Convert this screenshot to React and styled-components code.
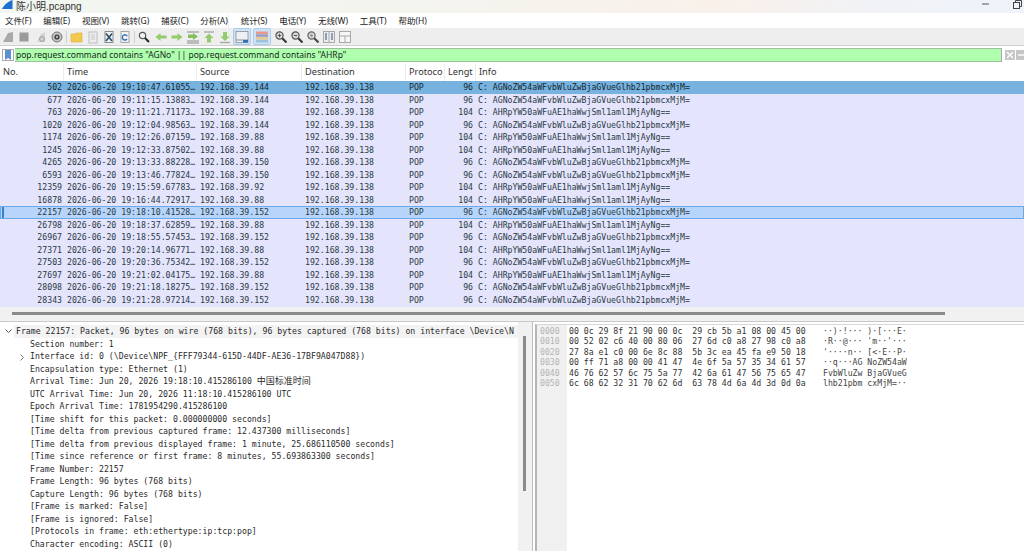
import React from "react";
import styled, { createGlobalStyle } from "styled-components";

const Global = createGlobalStyle`
  html, body { margin: 0; padding: 0; width: 1024px; height: 551px; overflow: hidden; background: #fff; }
  * { box-sizing: border-box; }
`;
const MONO = `"DejaVu Sans Mono", "Liberation Mono", "Noto Sans CJK SC", monospace`;
const UI = `"Noto Sans", "Noto Sans CJK SC", sans-serif`;

const Page = styled.div`
  width: 1024px; height: 551px; display: flex; flex-direction: column; overflow: hidden;
  font-family: ${UI}; color: #1c1c1c;
`;
const TitleBar = styled.div`
  height: 13px; flex: none; display: flex; align-items: flex-start; padding-left: 2px;
  background: linear-gradient(90deg, #f1f6f1 0%, #f5f4ee 45%, #f9f0ea 70%, #f1f2f6 85%, #eef3fa 100%);
  font-size: 9.6px; line-height: 13px; color: #333;
`;
const TitleText = styled.span` margin-left: 3px; flex: 1; font-family: "Liberation Sans", "Noto Sans CJK SC", sans-serif; font-size: 10px; `;
const WinButton = styled.div`
  width: 32px; height: 9px; display: flex; align-items: center; justify-content: center; flex: none;
  margin-right: ${p => p.$mr || 0}px;
`;
const MenuBar = styled.div`
  height: 15px; flex: none; display: flex; background: #fff; padding-left: 5px; gap: 11.8px;
  font-size: 8.5px; line-height: 15px; white-space: nowrap; color: #222;
`;
const MenuItem = styled.span`
  border-right: ${p => (p.$rule ? "1px solid #f0f0f0" : "none")};
`;
const Toolbar = styled.div`
  height: 18px; flex: none; display: flex; align-items: center; background: #eeeeee;
  border-bottom: 1px solid #cfcfcf;
`;
const ToolSlot = styled.div`
  width: ${p => p.$w || 16}px; height: 17px; flex: none; display: flex; align-items: center; justify-content: center;
  background: ${p => (p.$on ? "#cfe3f7" : "transparent")};
  border: ${p => (p.$on ? "1px solid #a9cdee" : "none")};
  border-radius: 2px;
  margin: ${p => p.$m || "0"};
`;
const ToolSep = styled.div`
  width: 1px; height: 12px; background: #cfcfcf; flex: none; margin: ${p => p.$m || "0 2px"};
`;
const FilterRow = styled.div`
  height: 18px; flex: none; display: flex; align-items: center; background: #fff; padding: 0 0 0 2px;
`;
const FilterShell = styled.div`
  flex: 1; height: 14px; display: flex; align-items: center;
  border-top: 1px solid #9fbf9f; border-bottom: 1px solid #9fbf9f; background: #afffaf;
`;
const Bookmark = styled.div`
  width: 12px; height: 12px; flex: none; background: #fff; border: 1px solid #aaa;
  display: flex; align-items: center; justify-content: center; margin-right: 1px;
`;
const FilterText = styled.div`
  flex: 1; font-size: 8.5px; line-height: 12px; color: #16281a; white-space: pre; padding-left: 1px;
`;
const FilterBtns = styled.div`
  display: flex; align-items: center; gap: 1px; width: 23px; height: 14px; padding-left: 3px; flex: none; overflow: hidden;
  border-left: 1px solid #aaa; margin-left: 0; background: #fff;
`;
const FilterBtn = styled.div`
  width: 10px; height: 10px; background: #c6c6c6; flex: none; display: flex; align-items: center; justify-content: center;
`;
const Cols = `64px 133px 105px 104px 39px 31px 1fr`;
const Header = styled.div`
  height: 17px; flex: none; display: grid; grid-template-columns: ${Cols}; background: #fff;
  font-size: 9.2px; line-height: 15px; color: #333;
`;
const HeadCell = styled.div`
  padding-left: 3px; white-space: nowrap; overflow: hidden; border-right: ${p => (p.$last ? "none" : "1px solid #ececec")};
`;
const PacketList = styled.div`
  height: 226px; flex: none; background: #e4e4fd; font: 8.2px/12.5px ${MONO}; color: #2a3a42;
`;
const Row = styled.div`
  height: 12.5px; display: grid; grid-template-columns: ${Cols}; white-space: pre; position: relative;
  background: ${p => (p.$sel === "primary" ? "#78b3e0" : p.$sel === "focus" ? "#b7d5fb" : "transparent")};
  box-shadow: ${p => (p.$sel === "focus" ? "inset 0 0 0 1px #6aa9ea" : "none")};
  color: ${p => (p.$sel === "primary" ? "#12272e" : "#2a3a42")};
`;
const Num = styled.span` text-align: right; padding-right: 2px; `;
const Cell = styled.span` padding-left: 3px; overflow: hidden; `;
const Len = styled.span` text-align: right; padding-right: 3px; `;
const Info = styled.span` padding-left: 2px; overflow: hidden; `;
const RowMark = styled.i`
  position: absolute; left: 2px; top: 1px; bottom: 1px; width: 2px; background: #3a7fc8;
`;
const HScroll = styled.div`
  height: 15px; flex: none; background: #f1f1f1; border-bottom: 1px solid #c9c9c9; padding: 5px 0 0 12px;
`;
const HThumb = styled.div` width: 933px; height: 3px; background: #8a8a8a; `;
const Bottom = styled.div` flex: 1; min-height: 0; display: flex; background: #fff; `;
const Detail = styled.div`
  width: 518px; flex: none; padding-top: 3px; font: 8.2px/12.5px ${MONO}; color: #2a2a2a; overflow: hidden;
`;
const DetailRow = styled.div`
  height: 12.5px; white-space: pre; position: relative; padding-left: ${p => (p.$top ? 16 : 30)}px;
  background: ${p => (p.$top ? "linear-gradient(90deg, #fff 14px, #f3f3f3 14px)" : "transparent")};
`;
const Arrow = styled.svg` position: absolute; left: ${p => p.$x}px; top: 4px; `;
const Cjk = styled.span` font-family: "Noto Sans CJK SC", sans-serif; font-size: 9px; `;
const VTrack = styled.div`
  width: 14px; flex: none; background: #f1f1f1; padding: 14px 0 0 5px;
`;
const VThumb = styled.div` width: 3px; height: 155px; background: #8a8a8a; `;
const Splitter = styled.div`
  width: 3px; flex: none; background: #fff; border-left: 1px solid #bdbdbd;
`;
const Hex = styled.div`
  flex: 1; display: flex; border-left: 2px solid #b5b5b5; border-top: 1px solid #d8d8d8; margin-top: 2px;
  font: 8.2px/10.4px ${MONO}; color: #333;
`;
const Offsets = styled.div`
  width: 30px; flex: none; background: #f0f0f0; padding: 1px 0 0 3px; color: #b4b4b4; white-space: pre;
`;
const HexBody = styled.div` padding: 1px 0 0 2px; flex: none; width: 256px; white-space: pre; `;
const AsciiBody = styled.div` padding-top: 1px; white-space: pre; color: #444; `;

const I = ({ children, w = 14, h = 14 }) => <svg width={w} height={h} viewBox="0 0 14 14">{children}</svg>;

const icons = {
  fin: <I><path d="M2 12 L7 3 L12 2 L12 12 Z" fill="#a9a9a9" /></I>,
  stop: <I><rect x="2.5" y="2.5" width="9" height="9" fill="#9a9a9a" /></I>,
  restart: <I><path d="M3 12 L7 4 L11 2 L11 12 Z" fill="#d4d4d4" /><circle cx="8" cy="9" r="2.4" fill="none" stroke="#9a9a9a" strokeWidth="1" /></I>,
  options: <I><circle cx="7" cy="7" r="5" fill="#c4c4c4" stroke="#777" /><circle cx="7" cy="7" r="2.6" fill="#444" /><circle cx="7" cy="7" r="1" fill="#ddd" /></I>,
  open: <I><path d="M1 4 H5 L6 3 H12 V12 H1 Z" fill="#f2c94c" stroke="#dcae35" strokeWidth=".6" /></I>,
  file: <I><rect x="3" y="2" width="8" height="11" fill="#ededed" stroke="#bdbdbd" /><path d="M5 5h4M5 7h4M5 9h4" stroke="#c8c8c8" /></I>,
  closeFile: <I><rect x="3" y="1.5" width="8" height="11" fill="#f2f2f2" stroke="#8a8a8a" /><path d="M4 3.5 L10 11 M10 3.5 L4 11" stroke="#27506f" strokeWidth="1.6" /></I>,
  reload: <I><rect x="3" y="1.5" width="8" height="11" fill="#f2f2f2" stroke="#a5a5a5" /><path d="M9.3 6.3 A2.6 2.6 0 1 0 9 9" fill="none" stroke="#2f6eb5" strokeWidth="1.4" /></I>,
  find: <I><circle cx="5.5" cy="5.5" r="3.2" fill="#eef2f2" stroke="#555" strokeWidth="1.2" /><path d="M8 8 L12 12" stroke="#222" strokeWidth="2" /></I>,
  back: <I><path d="M1.5 7 L6.5 3 V5.5 H12.5 V8.5 H6.5 V11 Z" fill="#93cc6c" /></I>,
  fwd: <I><path d="M12.5 7 L7.5 3 V5.5 H1.5 V8.5 H7.5 V11 Z" fill="#93cc6c" /></I>,
  jump: <I><path d="M1 2h12M1 11h12M1 13h12" stroke="#8c8c8c" /><path d="M2 4.5h5V3l5 3.5-5 3.500V8H2z" fill="#84bf5b" /></I>,
  first: <I><path d="M2 2h10" stroke="#a9a9a9" strokeWidth="1.4" /><path d="M7 3.500 L11.500 8 H9 V12.500 H5 V8 H2.500 Z" fill="#93cc6c" /></I>,
  last: <I><path d="M2 12.500h10" stroke="#a9a9a9" strokeWidth="1.4" /><path d="M7 11 L11.500 6.500 H9 V2 H5 V6.500 H2.500 Z" fill="#93cc6c" /></I>,
  scroll: <I><rect x="1" y="1.500" width="12" height="11" fill="#eef1f4" stroke="#8a8f96" strokeWidth=".8" /><path d="M1 10h12" stroke="#8a8f96" /><rect x="8" y="10" width="5" height="2.500" fill="#2f6db5" /></I>,
  color: <I><rect x="1" y="1.500" width="12" height="2.500" fill="#e79a8c" /><rect x="1" y="4.300" width="12" height="2.500" fill="#9a9ac4" /><rect x="1" y="7.100" width="12" height="2.500" fill="#e6c98a" /><rect x="1" y="9.900" width="12" height="2.500" fill="#9cc2dd" /></I>,
  zoomIn: <I><circle cx="5.500" cy="5.500" r="3.600" fill="#d9d9d9" stroke="#555" strokeWidth="1.200" /><path d="M8.300 8.300 L12.500 12.500" stroke="#333" strokeWidth="2" /><path d="M3.800 5.500h3.400M5.500 3.800v3.400" stroke="#555" /></I>,
  zoomOut: <I><circle cx="5.500" cy="5.500" r="3.600" fill="#d9d9d9" stroke="#555" strokeWidth="1.200" /><path d="M8.300 8.300 L12.500 12.500" stroke="#333" strokeWidth="2" /><path d="M3.800 5.500h3.400" stroke="#555" /></I>,
  zoomFit: <I><circle cx="5.500" cy="5.500" r="3.600" fill="#d9d9d9" stroke="#666" strokeWidth="1.200" /><path d="M8.300 8.300 L12.500 12.500" stroke="#444" strokeWidth="2" /><circle cx="5.500" cy="5.500" r="1.200" fill="#888" /></I>,
  resize: <I><rect x="1.500" y="1.500" width="11" height="11" fill="#ececec" stroke="#a8a8a8" /><path d="M7 2v10" stroke="#a8a8a8" /><path d="M4 3v7M10 3v7" stroke="#5f7f9f" strokeWidth="1.400" /></I>,
  grid: <I><rect x="1.500" y="1.500" width="11" height="11" fill="#f6f6f6" stroke="#a8a8a8" /><path d="M1.500 6h11M7 6v6.500" stroke="#a8a8a8" /></I>,
};

const Tool = ({ n, ...rest }) => <ToolSlot {...rest}>{icons[n]}</ToolSlot>;

const menus = ["文件(F)", "编辑(E)", "视图(V)", "跳转(G)", "捕获(C)", "分析(A)", "统计(S)", "电话(Y)", "无线(W)", "工具(T)", "帮助(H)"];
const A = "AGNoZW54aWFvbWluZwBjaGVueGlhb21pbmcxMjM=";
const B = "AHRpYW50aWFuAE1haWwjSml1aml1MjAyNg==";
const rows = [
  ["502", "19:10:47.61055", "144", 96, A, "primary"],
  ["677", "19:11:15.13883", "144", 96, A],
  ["763", "19:11:21.71173", "88", 104, B],
  ["1020", "19:12:04.98563", "144", 96, A],
  ["1174", "19:12:26.07159", "88", 104, B],
  ["1245", "19:12:33.87502", "88", 104, B],
  ["4265", "19:13:33.88228", "150", 96, A],
  ["6593", "19:13:46.77824", "150", 96, A],
  ["12359", "19:15:59.67783", "92", 104, B],
  ["16878", "19:16:44.72917", "88", 104, B],
  ["22157", "19:18:10.41528", "152", 96, A, "focus"],
  ["26798", "19:18:37.62859", "88", 104, B],
  ["26967", "19:18:55.57453", "152", 96, A],
  ["27371", "19:20:14.96771", "88", 104, B],
  ["27503", "19:20:36.75342", "152", 96, A],
  ["27697", "19:21:02.04175", "88", 104, B],
  ["28098", "19:21:18.18275", "152", 96, A],
  ["28343", "19:21:28.97214", "152", 96, A],
];
const details = [
  "Section number: 1",
  "Interface id: 0 (\\Device\\NPF_{FFF79344-615D-44DF-AE36-17BF9A047D88})",
  "Encapsulation type: Ethernet (1)",
  <>Arrival Time: Jun 20, 2026 19:18:10.415286100 <Cjk>中国标准时间</Cjk></>,
  "UTC Arrival Time: Jun 20, 2026 11:18:10.415286100 UTC",
  "Epoch Arrival Time: 1781954290.415286100",
  "[Time shift for this packet: 0.000000000 seconds]",
  "[Time delta from previous captured frame: 12.437300 milliseconds]",
  "[Time delta from previous displayed frame: 1 minute, 25.686110500 seconds]",
  "[Time since reference or first frame: 8 minutes, 55.693863300 seconds]",
  "Frame Number: 22157",
  "Frame Length: 96 bytes (768 bits)",
  "Capture Length: 96 bytes (768 bits)",
  "[Frame is marked: False]",
  "[Frame is ignored: False]",
  "[Protocols in frame: eth:ethertype:ip:tcp:pop]",
  "Character encoding: ASCII (0)",
];
const hexLines = [
  ["0000", "00 0c 29 8f 21 90 00 0c  29 cb 5b a1 08 00 45 00", "··)·!··· )·[···E·"],
  ["0010", "00 52 02 c6 40 00 80 06  27 6d c0 a8 27 98 c0 a8", "·R··@··· 'm··'···"],
  ["0020", "27 8a e1 c0 00 6e 8c 88  5b 3c ea 45 fa e9 50 18", "'····n·· [<·E··P·"],
  ["0030", "00 ff 71 a8 00 00 41 47  4e 6f 5a 57 35 34 61 57", "··q···AG NoZW54aW"],
  ["0040", "46 76 62 57 6c 75 5a 77  42 6a 61 47 56 75 65 47", "FvbWluZw BjaGVueG"],
  ["0050", "6c 68 62 32 31 70 62 6d  63 78 4d 6a 4d 3d 0d 0a", "lhb21pbm cxMjM=··"],
];

export default function App() {
  return (
    <Page>
      <Global />
      <TitleBar>
        <svg width="11" height="9" viewBox="0 0 11 9"><path d="M0 9 C2 5 5 2 10.500 0 L10.500 9 Z" fill="#1f6fd1" /></svg>
        <TitleText>陈小明.pcapng</TitleText>
        <WinButton>
          <svg width="9" height="5" viewBox="0 0 9 5"><path d="M1 2h7" stroke="#555" /></svg>
        </WinButton>
        <WinButton $mr={-9}>
          <svg width="9" height="9" viewBox="0 0 9 9"><rect x=".5" y="2.500" width="6" height="6" fill="none" stroke="#444" /><path d="M2.500 2.500v-2h6v6h-2" fill="none" stroke="#444" /></svg>
        </WinButton>
      </TitleBar>
      <MenuBar>
        {menus.map((m, i) => <MenuItem key={m} $rule={i === 5}>{m}</MenuItem>)}
      </MenuBar>
      <Toolbar>
        <Tool n="fin" /><Tool n="stop" /><Tool n="restart" $m="0 0 0 1px" /><Tool n="options" />
        <ToolSep $m="0 2px 0 1px" />
        <Tool n="open" /><Tool n="file" /><Tool n="closeFile" /><Tool n="reload" />
        <ToolSep $m="0 2px 0 1px" />
        <Tool n="find" $w={14} /><Tool n="back" $m="0 0 0 2px" /><Tool n="fwd" /><Tool n="jump" /><Tool n="first" /><Tool n="last" />
        <Tool n="scroll" $on $w={18} $m="0 0 0 0" />
        <Tool n="color" $on $w={18} $m="0 0 0 2px" />
        <Tool n="zoomIn" $m="0 0 0 2px" /><Tool n="zoomOut" /><Tool n="zoomFit" /><Tool n="resize" /><Tool n="grid" />
      </Toolbar>
      <FilterRow>
        <Bookmark>
          <svg width="8" height="10" viewBox="0 0 8 10"><path d="M1 0h6v10L4 8 1 10z" fill="#5f8fd0" /></svg>
        </Bookmark>
        <FilterShell>
          <FilterText>pop.request.command contains "AGNo" || pop.request.command contains "AHRp"</FilterText>
          <FilterBtns>
            <FilterBtn>
              <svg width="8" height="8" viewBox="0 0 8 8"><path d="M1 1l6 6M7 1L1 7" stroke="#fff" strokeWidth="1.200" /></svg>
            </FilterBtn>
            <FilterBtn>
              <svg width="8" height="8" viewBox="0 0 8 8"><path d="M1 4h6" stroke="#fff" strokeWidth="1.400" /></svg>
            </FilterBtn>
          </FilterBtns>
        </FilterShell>
      </FilterRow>
      <Header>
        {["No.", "Time", "Source", "Destination", "Protoco", "Lengt", "Info"].map((h, i) => (
          <HeadCell key={h} $last={i === 6}>{h}</HeadCell>
        ))}
      </Header>
      <PacketList>
        {rows.map(([no, t, src, len, info, sel]) => (
          <Row key={no} $sel={sel}>
            {sel === "focus" && <RowMark />}
            <Num>{no}</Num>
            <Cell>2026-06-20 {t}…</Cell>
            <Cell>192.168.39.{src}</Cell>
            <Cell>192.168.39.138</Cell>
            <Cell>POP</Cell>
            <Len>{len}</Len>
            <Info>C: {info}</Info>
          </Row>
        ))}
      </PacketList>
      <HScroll><HThumb /></HScroll>
      <Bottom>
        <Detail>
          <DetailRow $top>
            <Arrow $x={5} width="7" height="5" viewBox="0 0 7 5"><path d="M.5 .5L3.500 3.500 6.500 .5" fill="none" stroke="#555" /></Arrow>
            Frame 22157: Packet, 96 bytes on wire (768 bits), 96 bytes captured (768 bits) on interface \Device\N
          </DetailRow>
          {details.map((d, i) => (
            <DetailRow key={i}>
              {i === 1 && <Arrow $x={20} width="5" height="7" viewBox="0 0 5 7"><path d="M.5 .5L3.500 3.500 .5 6.500" fill="none" stroke="#777" /></Arrow>}
              {d}
            </DetailRow>
          ))}
        </Detail>
        <VTrack><VThumb /></VTrack>
        <Splitter />
        <Hex>
          <Offsets>{hexLines.map(l => l[0]).join("\n")}</Offsets>
          <HexBody>{hexLines.map(l => l[1]).join("\n")}</HexBody>
          <AsciiBody>{hexLines.map(l => l[2]).join("\n")}</AsciiBody>
        </Hex>
      </Bottom>
    </Page>
  );
}
